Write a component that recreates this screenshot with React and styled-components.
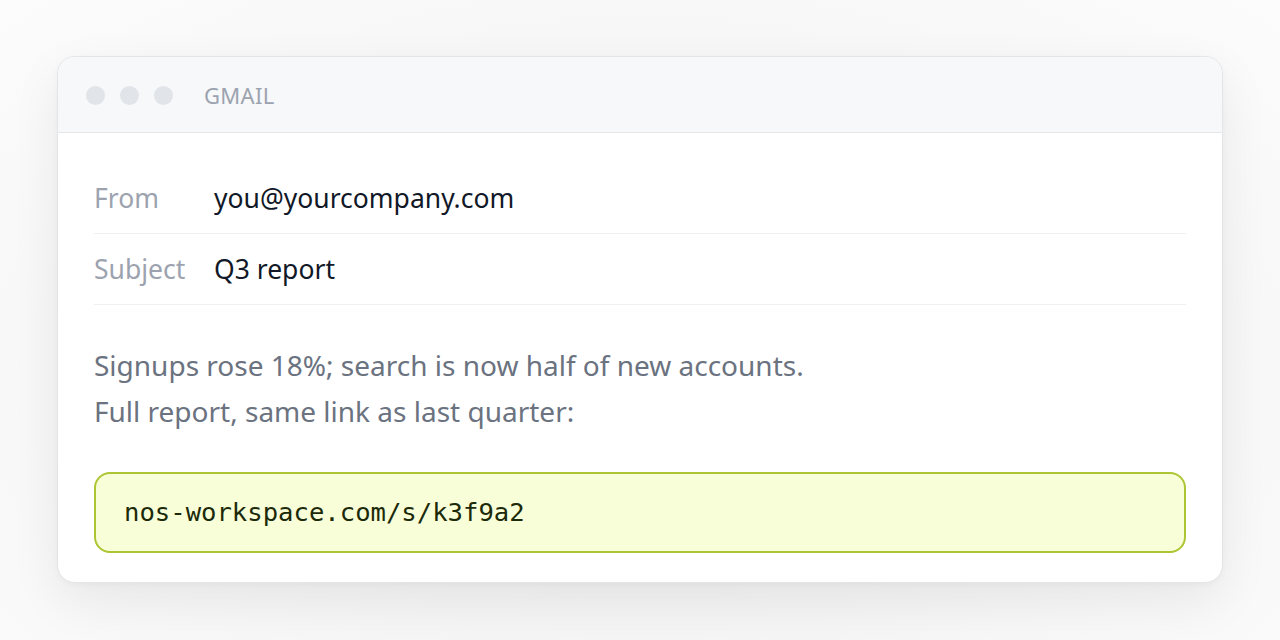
import React from "react";
import styled, { createGlobalStyle } from "styled-components";

const Global = createGlobalStyle`
  html, body { margin: 0; padding: 0; background: #ffffff; }
  body { font-family: "Noto Sans", "Open Sans", sans-serif; }
  * { box-sizing: border-box; }
`;

const Page = styled.div`
  width: 1280px;
  height: 640px;
  padding: 56px 57px;
  background: radial-gradient(ellipse at 50% 60%, #eeeeee 0%, #f6f6f6 55%, #fcfcfc 100%);
`;

const Card = styled.div`
  background: #ffffff;
  border: 1px solid #e3e5e8;
  border-radius: 18px;
  overflow: hidden;
  box-shadow: 0 18px 50px rgba(0, 0, 0, 0.07), 0 2px 6px rgba(0, 0, 0, 0.03);
`;

const TitleBar = styled.div`
  height: 76px;
  display: flex;
  align-items: center;
  gap: 15px;
  padding: 1px 28px 0;
  background: #f7f8fa;
  border-bottom: 1px solid #e4e6e9;
`;

const Dot = styled.span`
  width: 19px;
  height: 19px;
  border-radius: 50%;
  background: #e1e4e8;
`;

const AppName = styled.span`
  margin-left: 16px;
  font-size: 22px;
  color: #9ca3af;
  letter-spacing: 0.3px;
`;

const Content = styled.div`
  padding: 30px 36px 29px;
`;

const Row = styled.div`
  display: flex;
  align-items: center;
  height: 71px;
  border-bottom: 1px solid #eef0f2;
  font-size: 26.5px;
`;

const Label = styled.span`
  width: 120px;
  color: #9ca3af;
`;

const Value = styled.span`
  color: #111827;
`;

const Body = styled.p`
  margin: 37px 0 38px;
  font-size: 28px;
  line-height: 46px;
  color: #6b7280;
`;

const Code = styled.div`
  border: 2px solid #adc532;
  background: #f7fed8;
  border-radius: 16px;
  padding: 20px 28px;
  font-family: "DejaVu Sans Mono", "Liberation Mono", monospace;
  font-size: 25.6px;
  line-height: 37px;
  color: #1c2a0a;
`;

export default function App() {
  return (
    <>
      <Global />
      <Page>
        <Card>
          <TitleBar>
            <Dot />
            <Dot />
            <Dot />
            <AppName>GMAIL</AppName>
          </TitleBar>
          <Content>
            <Row>
              <Label>From</Label>
              <Value>you@yourcompany.com</Value>
            </Row>
            <Row>
              <Label>Subject</Label>
              <Value>Q3 report</Value>
            </Row>
            <Body>
              Signups rose 18%; search is now half of new accounts.
              <br />
              Full report, same link as last quarter:
            </Body>
            <Code>nos-workspace.com/s/k3f9a2</Code>
          </Content>
        </Card>
      </Page>
    </>
  );
}
